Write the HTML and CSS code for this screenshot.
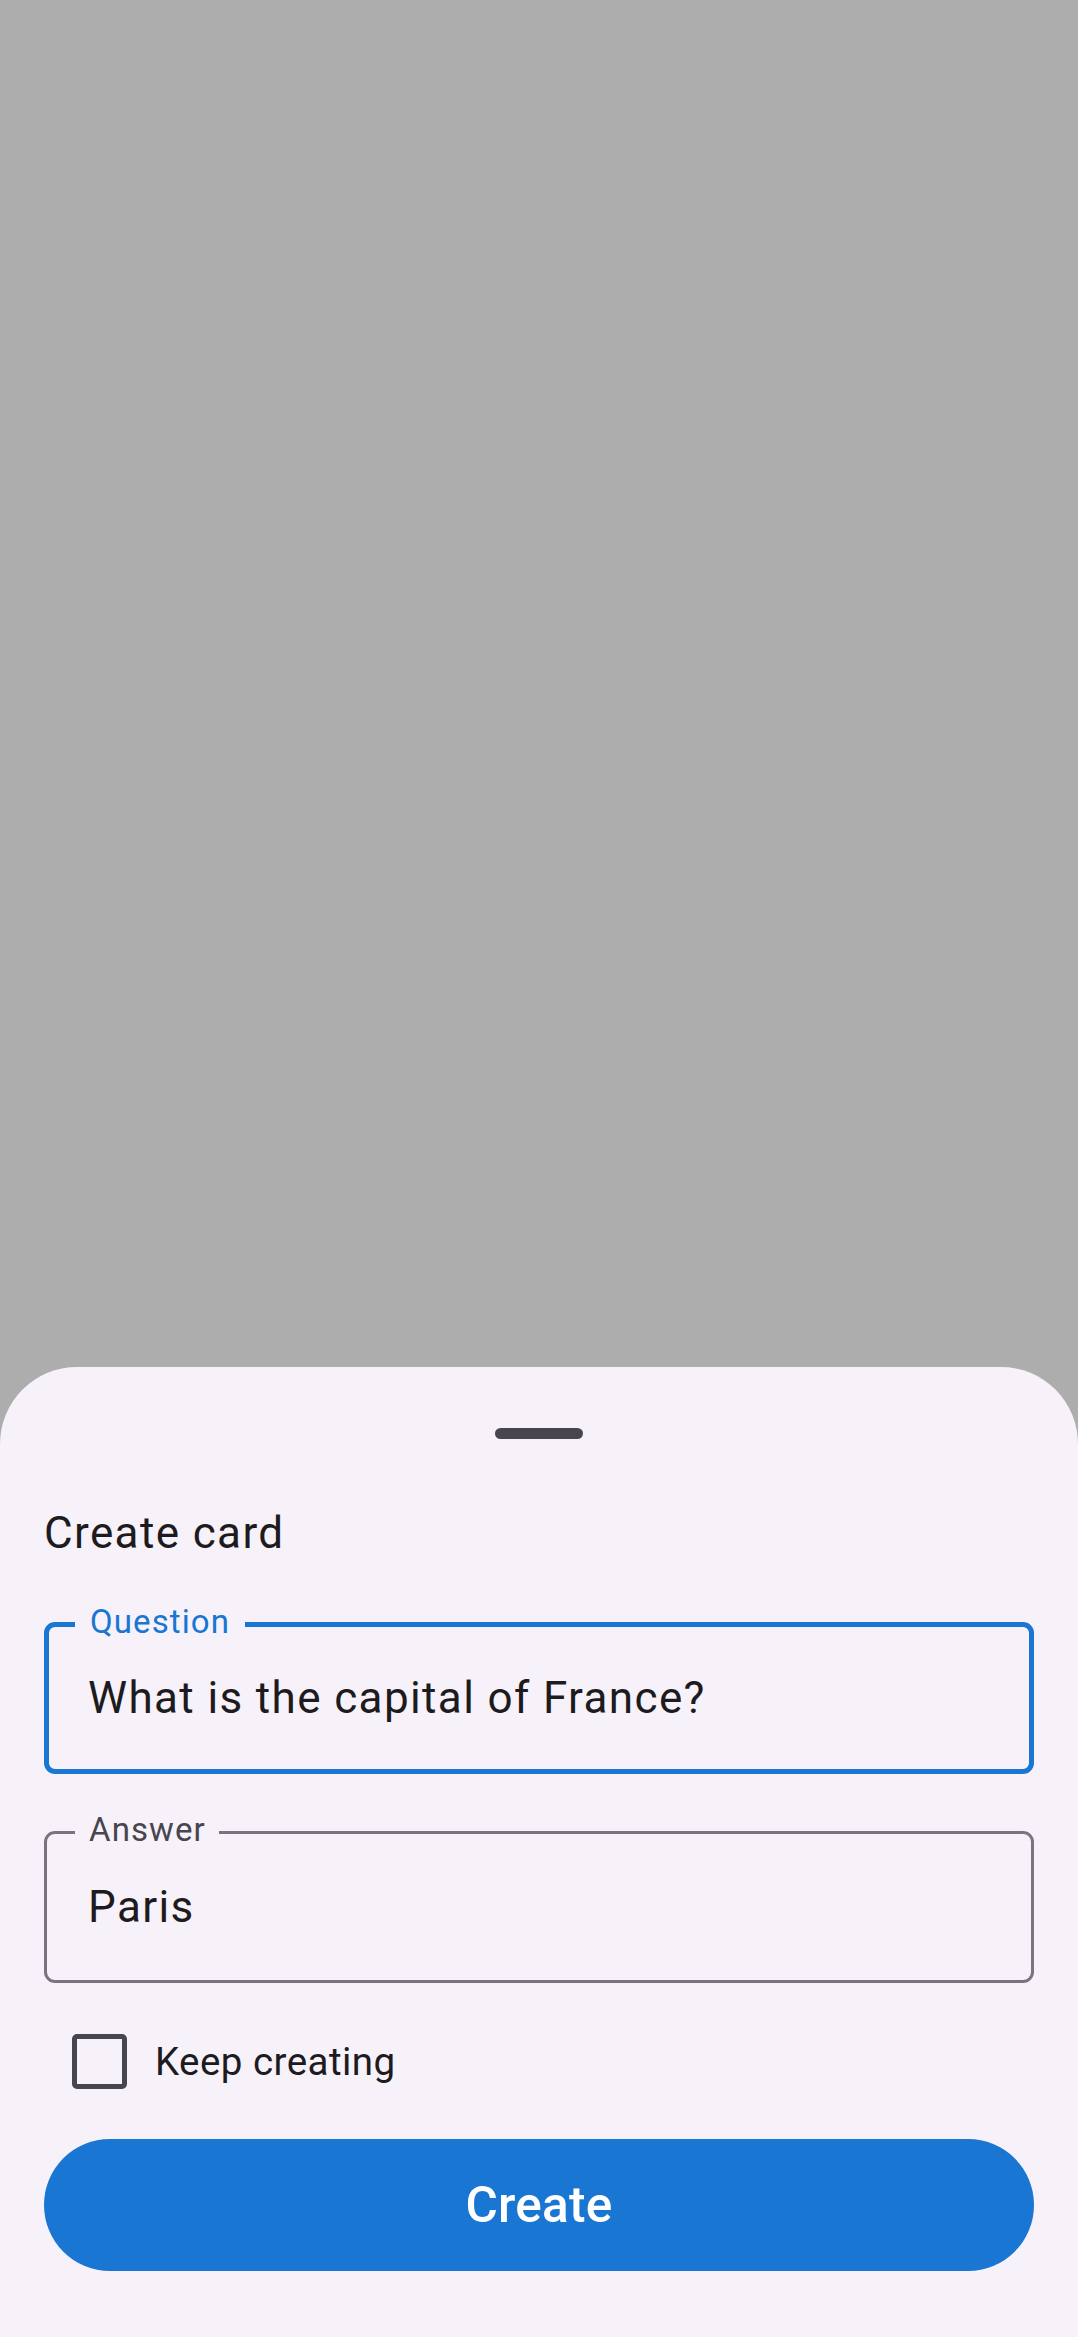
FILE: index.html
```html
<!DOCTYPE html>
<html lang="en">

<head>
  <meta charset="UTF-8">
  <meta name="viewport" content="width=device-width, initial-scale=1.0">
  <title>Create card</title>
  <link rel="stylesheet" href="styles.css">
</head>

<body>

  <div class="screen">
    <div class="scrim"></div>

    <div class="sheet">
      <div class="handle"></div>

      <h2 class="sheet-title">Create card</h2>

      <div class="field field-focused">
        <span class="field-label">Question</span>
        <div class="field-value">What is the capital of France?</div>
      </div>

      <div class="field field-answer">
        <span class="field-label">Answer</span>
        <div class="field-value">Paris</div>
      </div>

      <label class="check-row">
        <span class="check-box"></span>
        <span class="check-text">Keep creating</span>
      </label>

      <button class="btn-create">Create</button>
    </div>
  </div>

</body>

</html>
```

FILE: styles.css
```css
* {
  padding: 0;
  margin: 0;
  box-sizing: border-box;
}

body {
  font-family: Roboto, 'Noto Sans', sans-serif;
  color: #1d1b20;
  background-color: #adadad;
}

.screen {
  min-height: 100vh;
  display: flex;
  flex-direction: column;
}

.scrim {
  flex: 1;
  background-color: #adadad;
}

.sheet {
  background-color: #f7f2f9;
  border-radius: 77px 77px 0 0;
  padding: 0 44px 66px 44px;
  display: flex;
  flex-direction: column;
}

.handle {
  width: 88px;
  height: 11px;
  margin: 61px auto 0 auto;
  border-radius: 6px;
  background-color: #49454f;
}

.sheet-title {
  margin-top: 61px;
  font-size: 44px;
  line-height: 66px;
  font-weight: 400;
  letter-spacing: 1.375px;
}

/* outlined text fields */
.field {
  position: relative;
  height: 152px;
  border-radius: 11px;
  display: flex;
  align-items: center;
}

.field-focused {
  margin-top: 56px;
  border: 5px solid #1976d2;
  padding-left: 39px;
}

.field-answer {
  margin-top: 57px;
  border: 3px solid #79747e;
  padding-left: 41px;
}

.field-label {
  position: absolute;
  padding: 0 15px;
  font-size: 33px;
  line-height: 33px;
  letter-spacing: 1.1px;
  background-color: #f7f2f9;
}

.field-focused .field-label {
  top: -22px;
  left: 26px;
  color: #1976d2;
}

.field-answer .field-label {
  top: -21px;
  left: 28px;
  padding: 0 13px 0 14px;
  color: #49454f;
}

.field-value {
  font-size: 44px;
  line-height: 66px;
  letter-spacing: 1.375px;
}

/* checkbox */
.check-row {
  margin-top: 51px;
  height: 55px;
  display: flex;
  align-items: center;
  gap: 28px;
  padding-left: 28px;
}

.check-box {
  width: 55px;
  height: 55px;
  border: 5px solid #49454f;
  border-radius: 5px;
}

.check-text {
  font-size: 38.5px;
  line-height: 55px;
  letter-spacing: 0.45px;
}

.btn-create {
  margin-top: 50px;
  height: 132px;
  width: 100%;
  border: none;
  border-radius: 66px;
  background-color: #1976d2;
  color: #fff;
  font-family: Roboto, 'Noto Sans', sans-serif;
  font-size: 49.5px;
  font-weight: 500;
  letter-spacing: 0.2px;
}
```
